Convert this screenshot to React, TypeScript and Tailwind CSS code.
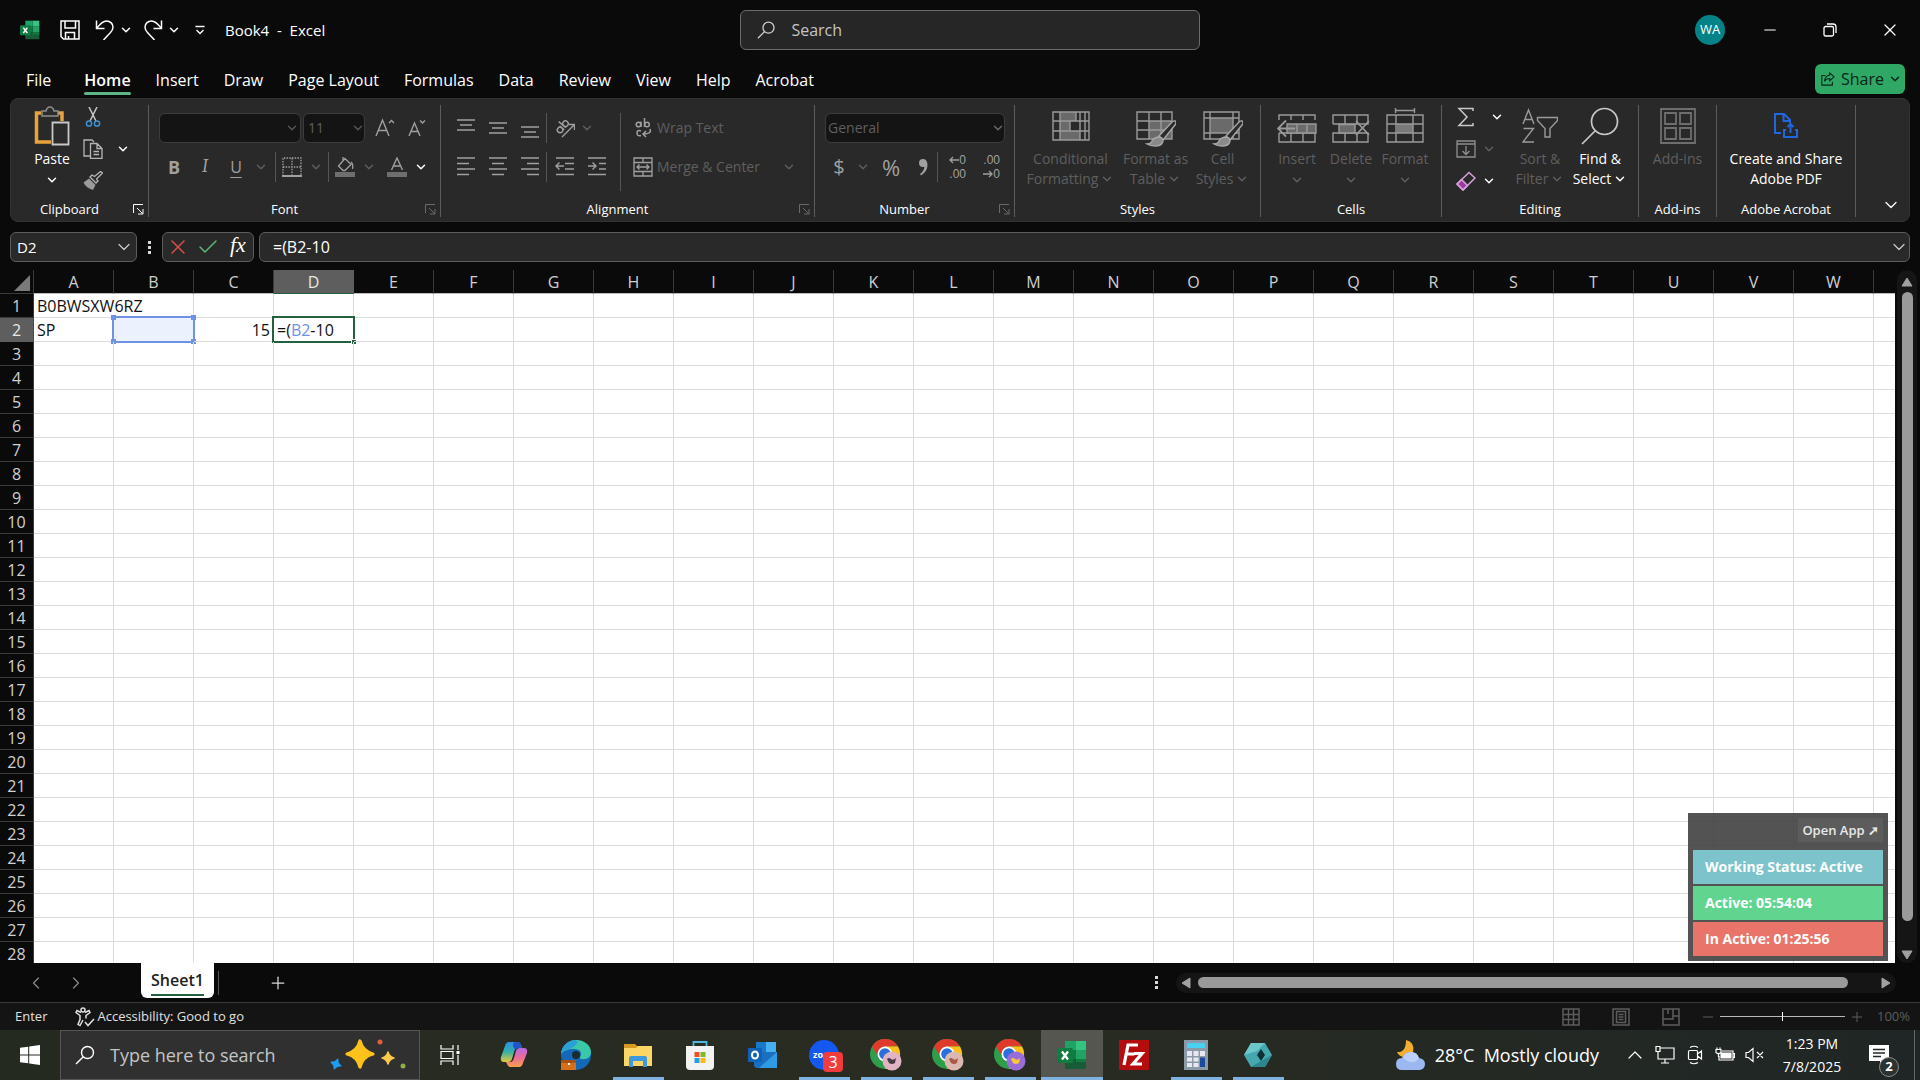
import React from "react";
import clsx from "clsx";
import { Check, ChevronDown, ChevronLeft, ChevronRight, ChevronUp, Minus, Plus, X } from "lucide-react";

type IconProps = { className?: string };

const MENU_TABS = ["File", "Home", "Insert", "Draw", "Page Layout", "Formulas", "Data", "Review", "View", "Help", "Acrobat"];
const COLUMNS = "ABCDEFGHIJKLMNOPQRSTUVW".split("");
const ROWS = Array.from({ length: 28 }, (_, i) => i + 1);

/* ---------- icons ---------- */

const ExcelIcon = ({ className }: IconProps) => (
    <svg viewBox="0 0 30 30" className={className}>
        <path d="M8 1h11v9H8z" fill="#21a366" />
        <path d="M19 1h10v9H19z" fill="#33c481" />
        <path d="M8 10h11v9H8z" fill="#107c41" />
        <path d="M19 10h10v9H19z" fill="#21a366" />
        <path d="M8 19h21v9q0 1-1 1H9q-1 0-1-1z" fill="#185c37" />
        <path d="M19 19h10v3H19z" fill="#107c41" />
        <rect x="0" y="8" width="16" height="15" rx="1.5" fill="#107c41" />
        <path d="m5 11.500 6 8M11 11.500l-6 8" stroke="#fff" strokeWidth="2.200" fill="none" />
    </svg>
);

const SaveIcon = ({ className }: IconProps) => (
    <svg viewBox="0 0 20 20" className={className} fill="none" stroke="currentColor" strokeWidth="1.500">
        <path d="M1 1h18v18H3.500L1 16.500zM5 1v7h10.500V1M5.500 19v-6.500h9V19M8.500 19v-3" />
    </svg>
);

const UndoIcon = ({ className }: IconProps) => (
    <svg viewBox="0 0 20 20" className={className} fill="none" stroke="currentColor" strokeWidth="1.500">
        <path d="M1.500 .5v8h8M1.800 8.200C5 4 7.500 1 11.500 1c4 0 6.500 3 6.500 6 0 2.500-1 4-2.500 5.500L8.500 20" />
    </svg>
);

const RedoIcon = ({ className }: IconProps) => (
    <svg viewBox="0 0 20 20" className={className} fill="none" stroke="currentColor" strokeWidth="1.500">
        <path d="M18.500 .5v8h-8M18.200 8.200C15 4 12.500 1 8.500 1 4.500 1 2 4 2 7c0 2.500 1 4 2.500 5.500l7 7.500" />
    </svg>
);

const SearchIcon = ({ className }: IconProps) => (
    <svg viewBox="0 0 20 20" className={className} fill="none" stroke="currentColor" strokeWidth="1.400">
        <circle cx="12.500" cy="7.500" r="6" />
        <path d="M8.300 11.700 1 19" />
    </svg>
);

const PasteIcon = ({ className }: IconProps) => (
    <svg viewBox="0 0 36 40" className={className} fill="none">
        <path d="M7 7H2.500v29H17M24 7h4v8" stroke="#e8a33d" strokeWidth="3.500" />
        <path d="M8 5h4q1-4 4-4t4 4h4v5H8z" fill="#2b2b2b" stroke="#8f8f8f" strokeWidth="1.500" />
        <path d="M18.500 16.500h16v22h-16z" fill="#2b2b2b" stroke="#c8c8c8" strokeWidth="1.800" />
    </svg>
);

const CutIcon = ({ className }: IconProps) => (
    <svg viewBox="0 0 20 20" className={className} fill="none">
        <path d="M6 0l7 14M14 0L7 14" stroke="#c8c8c8" strokeWidth="1.500" />
        <circle cx="6" cy="16.500" r="2.600" stroke="#3f8fd0" strokeWidth="1.500" />
        <circle cx="14" cy="16.500" r="2.600" stroke="#3f8fd0" strokeWidth="1.500" />
    </svg>
);

const CopyIcon = ({ className }: IconProps) => (
    <svg viewBox="0 0 20 20" className={className} fill="none" stroke="#b5b5b5" strokeWidth="1.300">
        <path d="M7 17H1V1h8l2 2M7.500 4.500H14l5 5v10H7.500zM14 4.500v5h5M10.500 12.500h5.500M10.500 15.500h5.500" />
    </svg>
);

const PainterIcon = ({ className }: IconProps) => (
    <svg viewBox="0 0 20 20" className={className}>
        <path d="M17.500 .5 19.500 2l-6 6 1.500 2-2 2-6-6 2-2 2.500 1.500z" fill="none" stroke="#b5b5b5" strokeWidth="1.300" />
        <path d="M6 7.500 12.500 14 10 19Q3 17 .5 11.500z" fill="#9a9a9a" />
    </svg>
);

const LauncherIcon = ({ className }: IconProps) => (
    <svg viewBox="0 0 11 11" className={className} fill="none" stroke="currentColor">
        <path d="M.5 9V.5H10M4 4l5.500 5.500M10 5v5H5" />
    </svg>
);

const LINES = {
    top: "M1 2h18M4 7h12M1 12h18",
    middle: "M1 5h18M4 10h12M1 15h18",
    bottom: "M1 9h18M4 14h12M1 19h18",
    left: "M1 1h18M1 6.500h12M1 12h18M1 17.500h12",
    center: "M1 1h18M4 6.500h12M1 12h18M4 17.500h12",
    right: "M1 1h18M7 6.500h12M1 12h18M7 17.500h12",
    outdent: "M1 1h18M10 6.500h9M10 12h9M1 17.500h18M9 9H1M4.500 5.500 1 9l3.500 3.500",
    indent: "M1 1h18M12 6.500h7M12 12h7M1 17.500h18M1 9h8M5.500 5.500 9 9l-3.500 3.500",
};

const LinesIcon = ({ kind }: { kind: keyof typeof LINES }) => (
    <svg viewBox="0 0 20 20" className="size-5" fill="none" stroke="currentColor" strokeWidth="1.400">
        <path d={LINES[kind]} />
    </svg>
);

const BordersIcon = ({ className }: IconProps) => (
    <svg viewBox="0 0 20 20" className={className} fill="none" stroke="currentColor" strokeWidth="1.300">
        <path d="M1 19V1h18v18M10 1v18M1 10h18" strokeDasharray="1.500 1.200" />
        <path d="M0 19h20" strokeWidth="2" />
    </svg>
);

const FillIcon = ({ className }: IconProps) => (
    <svg viewBox="0 0 20 20" className={className} fill="none" stroke="currentColor" strokeWidth="1.300">
        <path d="m10 1.500 6 6-6 6H8L3.500 9zM8 4V0M16 5q2.500 2 1.500 7" />
        <path d="M0 15h20v5H0z" fill="#6e6e6e" stroke="none" />
    </svg>
);

const MergeIcon = ({ className }: IconProps) => (
    <svg viewBox="0 0 20 20" className={className} fill="none" stroke="currentColor" strokeWidth="1.300">
        <path d="M1 1h18v18H1zM1 5.500h18M1 14.500h18M10 1v4.500M10 14.500V19M4 10h12M6.500 7.500 4 10l2.500 2.500M13.500 7.500 16 10l-2.500 2.500" />
    </svg>
);

const ConditionalIcon = ({ className }: IconProps) => (
    <svg viewBox="0 0 38 30" className={className} fill="none" stroke="#9a9a9a" strokeWidth="1.400">
        <path d="M8 1h16v9H8zM8 10h10v10H8zM8 20h20v9H8z" fill="#6a6a6a" stroke="none" />
        <path d="M1 1h36v28H1zM1 10h36M1 20h36M8 1v28M18 10v10M28 1v28M33 1v28M24 1v9" />
    </svg>
);

const Brush = () => (
    <>
        <path d="M39 10q2 1 0 4L27 29l-4-4L36 11q2-1.500 3-1z" fill="#2b2b2b" stroke="#a8a8a8" />
        <path d="M22 26q5 0 5 4-1 5-8 5-5 0-8-2 4 0 5-3t6-4z" fill="#8a8a8a" stroke="#a8a8a8" />
    </>
);

const FormatTableIcon = ({ className }: IconProps) => (
    <svg viewBox="0 0 40 36" className={className} fill="none" stroke="#9a9a9a" strokeWidth="1.400">
        <path d="M13 10h23v18H13z" fill="#6a6a6a" stroke="none" />
        <path d="M1 1h35v27H1zM1 10h35M1 19h35M13 1v27M25 1v27" />
        <Brush />
    </svg>
);

const CellStylesIcon = ({ className }: IconProps) => (
    <svg viewBox="0 0 40 36" className={className} fill="none" stroke="#9a9a9a" strokeWidth="1.400">
        <path d="M7 7h23v15H7z" fill="#6a6a6a" stroke="none" />
        <path d="M1 1h35v27H1zM1 7h35M1 22h35M7 1v27M30 1v27" />
        <Brush />
    </svg>
);

const InsertCellsIcon = ({ className }: IconProps) => (
    <svg viewBox="0 0 40 36" className={className} fill="none" stroke="#9a9a9a" strokeWidth="1.400">
        <path d="M2 12V7h36v5M2 25v9h36v-9M14 7v5M26 7v5M14 25v9M26 25v9M2 25h36" />
        <path d="M10 16h29v9H10z" fill="#6a6a6a" />
        <path d="M20 16v9M30 16v9" />
        <path d="M18 20.500H1M9 12.500l-8 8 8 8" strokeWidth="1.800" />
    </svg>
);

const DeleteCellsIcon = ({ className }: IconProps) => (
    <svg viewBox="0 0 40 36" className={className} fill="none" stroke="#9a9a9a" strokeWidth="1.400">
        <path d="M2 16V7h35v9H2M2 34v-9h35v9zM14 7v9M26 7v9M14 25v9M26 25v9" />
        <path d="M8 16.500h16v8.500H8z" fill="#6a6a6a" />
        <path d="M25 13l13 14M38 13 25 27" strokeWidth="1.800" />
    </svg>
);

const FormatCellsIcon = ({ className }: IconProps) => (
    <svg viewBox="0 0 40 36" className={className} fill="none" stroke="#9a9a9a" strokeWidth="1.400">
        <path d="M12 16h16v9H12z" fill="#7a7a7a" stroke="none" />
        <path d="M2 7h36v27H2zM2 16h36M2 25h36M11 7v27M28 7v27M10 2.500h20M10.500 0v5M29.500 0v5" />
    </svg>
);

const SigmaIcon = ({ className }: IconProps) => (
    <svg viewBox="0 0 20 20" className={className} fill="none" stroke="#c8c8c8" strokeWidth="1.500">
        <path d="M17 4V1.500H3L11 10l-8 8.500h14V16" />
    </svg>
);

const FillDownIcon = ({ className }: IconProps) => (
    <svg viewBox="0 0 20 20" className={className} fill="none" stroke="#8f8f8f" strokeWidth="1.300">
        <path d="M1 2h18v16H1zM1 5h18M10 7v8.500M6.500 12l3.500 3.500 3.500-3.500" />
    </svg>
);

const EraserIcon = ({ className }: IconProps) => (
    <svg viewBox="0 0 20 20" className={className} fill="none" stroke="#d9a0dc" strokeWidth="1.500">
        <path d="m5.500 8.500 6 6L7 19 1 13z" fill="#9b3aa0" />
        <path d="M13 1.500 19 7 7 19 1 13z" />
    </svg>
);

const SortFilterIcon = ({ className }: IconProps) => (
    <svg viewBox="0 0 36 36" className={className} fill="none" stroke="#9a9a9a" strokeWidth="1.400">
        <path d="M1 16 6.500 2 12 16M3 11.500h7M1.500 20.500h10L1 34h11M15.500 9.500h20v3l-7.500 8V29h-5v-8.500l-7.500-8z" />
    </svg>
);

const FindIcon = ({ className }: IconProps) => (
    <svg viewBox="0 0 38 38" className={className} fill="none" stroke="#c8c8c8" strokeWidth="1.700">
        <circle cx="23.500" cy="14.500" r="13" />
        <path d="M14 24 1 37" />
    </svg>
);

const AddinsIcon = ({ className }: IconProps) => (
    <svg viewBox="0 0 36 36" className={className} fill="none" stroke="#6e6e6e" strokeWidth="1.800">
        <path d="M1 1h34v34H1zM5 5h11v11H5zM20 5h11v11H20zM5 20h11v11H5zM20 20h11v11H20z" />
    </svg>
);

const AdobePdfIcon = ({ className }: IconProps) => (
    <svg viewBox="0 0 24 26" className={className} fill="none" stroke="#1f66e0" strokeWidth="2">
        <path d="M7 20H1V1h9l6 6v3M9.500 1v7H16M12 17h-2v7h13v-7h-2M16.500 20v-9M13.500 14l3-3 3 3" />
    </svg>
);

const ShareIcon = ({ className }: IconProps) => (
    <svg viewBox="0 0 16 16" className={className} fill="none" stroke="currentColor" strokeWidth="1.200">
        <path d="M5 4H1v11h12v-4M10 1l5 4.500-5 4.500V7.500q-4 0-6 3 .5-6 6-7z" />
    </svg>
);

const AccessibilityIcon = ({ className }: IconProps) => (
    <svg viewBox="0 0 20 20" className={className} fill="none" stroke="currentColor" strokeWidth="1.500">
        <circle cx="8" cy="3" r="2" />
        <path d="M6 5.500 2 3.500 1 5.500l4 3v4l-2 5 2 1 3-5.500M10 5.500l4-2 1 2-4 3v3M10 15l3 3.500L19 12" />
    </svg>
);

const WindowsIcon = ({ className }: IconProps) => (
    <svg viewBox="0 0 20 20" className={className} fill="#fff">
        <path d="M0 2.800 8.200 1.700v7.800H0zM9.200 1.500 20 0v9.500H9.200zM0 10.500h8.200v7.800L0 17.200zM9.200 10.500H20V20L9.200 18.500z" />
    </svg>
);

const star = "M0-10Q2-2 10 0 2 2 0 10-2 2-10 0-2-2 0-10z";

const SparklesIcon = ({ className }: IconProps) => (
    <svg viewBox="0 0 80 32" className={className} strokeLinejoin="round">
        <path d={star} transform="translate(31 15) scale(1.300)" fill="#fcc21b" stroke="#fcc21b" strokeWidth="2.500" />
        <path d={star} transform="translate(59 19) scale(.6)" fill="#fcc94a" stroke="#fcc94a" strokeWidth="2.500" />
        <path d={star} transform="translate(7 25) rotate(20) scale(.5)" fill="#1e9df0" stroke="#1e9df0" strokeWidth="3" />
        <circle cx="51" cy="3" r="2.500" fill="#e0603c" />
        <circle cx="74" cy="27" r="2.500" fill="#8bb04a" />
    </svg>
);

const TaskViewIcon = ({ className }: IconProps) => (
    <svg viewBox="0 0 20 20" className={className} fill="none" stroke="#fff" strokeWidth="1.200">
        <path d="M1 0v4h12V0M1 6.500h12v7H1zM1 20v-4h12v4M18 0v5M18 10v10" />
        <path d="M16.500 6h3v3h-3z" fill="#fff" stroke="none" />
    </svg>
);

const CopilotIcon = () => (
    <svg viewBox="0 0 30 30" className="size-[30px]">
        <defs>
            <linearGradient id="copA" x1="0" y1="0" x2="0" y2="1">
                <stop offset="0" stopColor="#2a8fe8" />
                <stop offset=".5" stopColor="#36b2a8" />
                <stop offset="1" stopColor="#e8c83a" />
            </linearGradient>
            <linearGradient id="copB" x1="0" y1="0" x2="0" y2="1">
                <stop offset="0" stopColor="#b56ae8" />
                <stop offset=".5" stopColor="#ee6a9a" />
                <stop offset="1" stopColor="#f7a04a" />
            </linearGradient>
        </defs>
        <path d="M10 2h9q2 0 3 3l1 3h-4q-3 0-4 4l-2 7q-1 3-4 3H5q-4 0-3-5L6 6q1-4 4-4z" fill="url(#copA)" />
        <path d="M19 2q2 0 3 3l1 3h-4q-2 0-3 2l-2-4q0-4 2-4z" fill="#2254c8" />
        <path d="M20 27h-9q-2 0-3-3l-1-2h4q3 0 4-4l2-7q1-3 4-3h4q4 0 3 5l-4 10q-1 4-4 4z" fill="url(#copB)" />
    </svg>
);

const EdgeIcon = () => (
    <svg viewBox="0 0 30 30" className="size-[30px]">
        <circle cx="15" cy="15" r="15" fill="#1468b8" />
        <path d="M0 14C1 5 8 0 15 0c9 0 15 6 15 12 0 5-4 8-9 7-3 0-2-2-1-4 1-4-3-6-7-6C7 9 2 11 0 14z" fill="#3ac8a8" />
        <path d="M0 14C1 5 8 0 14 0c6 3-1 6-5 9-4 1-7 2-9 5z" fill="#2a9fd8" />
        <circle cx="15" cy="15" r="4" fill="#1d2a30" />
        <path d="M0 20h15v10H0z" fill="#d8701a" />
        <path d="M0 20h15v3H0z" fill="#a8500f" />
        <path d="M7 23h2v2H7z" fill="#fff" />
    </svg>
);

const FolderIcon = () => (
    <svg viewBox="0 0 30 30" className="size-[30px]">
        <path d="M1 4h11l2 2h14v6H1z" fill="#d99a20" />
        <path d="M1 8h12l2-2h14v20H1z" fill="#fbd667" />
        <path d="M6 27V18q0-2 2-2h14q2 0 2 2v9h-4v-6H10v6z" fill="#3f97dc" />
    </svg>
);

const StoreIcon = () => (
    <svg viewBox="0 0 30 30" className="size-[30px]">
        <path d="M8.500 8V2h13v6" fill="none" stroke="#4ab8e0" strokeWidth="1.800" />
        <path d="M1 6h28v20q0 4-4 4H5q-4 0-4-4z" fill="#f2f2f2" />
        <path d="M9.500 12h5v5h-5z" fill="#f04e24" />
        <path d="M15.500 12h5v5h-5z" fill="#7db928" />
        <path d="M9.500 18h5v5h-5z" fill="#1fa0e0" />
        <path d="M15.500 18h5v5h-5z" fill="#fdb813" />
    </svg>
);

const OutlookIcon = () => (
    <svg viewBox="0 0 30 30" className="size-[30px]">
        <path d="M9 2h20v10H9z" fill="#1a78c8" />
        <path d="M19 2h10v10H19z" fill="#48b0ee" />
        <path d="M7 12h23v16H9l-2-2z" fill="#1b6fc0" />
        <path d="M30 12v16H12z" fill="#2f9be6" />
        <rect x="1" y="8" width="14" height="14" rx="1" fill="#0f62b8" />
        <ellipse cx="8" cy="15" rx="3" ry="3.500" fill="none" stroke="#fff" strokeWidth="2" />
    </svg>
);

const ZoomAppIcon = () => (
    <span className="relative flex size-[30px] items-center rounded-full bg-[#1558f0] pl-1 text-[9px] font-bold text-white">
        zo
        <span className="absolute -right-1 -bottom-0.5 flex size-5 items-center justify-center rounded bg-[#f23c3c] text-base font-normal">
            3
        </span>
    </span>
);

const ChromeIcon = ({ badge, mark }: { badge: string; mark: string }) => (
    <svg viewBox="0 0 32 32" className="size-8">
        <circle cx="15" cy="15" r="15" fill="#2f9e4a" />
        <path d="M2 7.500A15 15 0 0 1 28 7.500H15L9 18.500z" fill="#e03a2c" />
        <path d="M28 7.500A15 15 0 0 1 15 30l7-11.500L15 7.500z" fill="#fbc116" />
        <circle cx="15" cy="15" r="7.500" fill="#fff" />
        <circle cx="15" cy="15" r="5.800" fill="#2a6fdc" />
        <circle cx="22" cy="22" r="9.500" fill={badge} />
        <path d="M17 20q2-2 4 0t5-1l-1 5q-3 2-6 0z" fill={mark} />
    </svg>
);

const FileZillaIcon = () => (
    <svg viewBox="0 0 30 30" className="size-[30px]">
        <path d="M0 0h30v30H0z" fill="#b50d0d" />
        <path d="M5 25 9 5h10M7.500 14h8M15 13.500h8L14 24h9" fill="none" stroke="#fff" strokeWidth="3.200" />
    </svg>
);

const CalculatorIcon = () => (
    <svg viewBox="0 0 24 30" className="h-[30px] w-6">
        <path d="M0 0h24v30H0z" fill="#8a9aa8" />
        <path d="M3 3h18v5H3z" fill="#4ad0f0" />
        <path d="M3 11h5v5H3zM9.500 11h5v5h-5zM16 11h5v5h-5zM3 17.500h5v4H3zM9.500 17.500h5v4h-5zM3 23h5v4H3zM9.500 23h5v4h-5z" fill="#e8e8ee" />
        <path d="M16 17.500h5V27h-5z" fill="#1c4a9c" />
    </svg>
);

const HexIcon = () => (
    <svg viewBox="0 0 30 30" className="size-[30px]">
        <path d="M1 15 8 3h14l7 12-7 12H8z" fill="#45a8ae" />
        <path d="M1 15 8 3h14l-8 8z" fill="#6cc6ca" />
        <path d="M8 27h14l7-12-9 5z" fill="#2d868e" />
        <path d="m18 9 4 6-4 6-4-6z" fill="#0d3038" />
    </svg>
);

const WeatherIcon = ({ className }: IconProps) => (
    <svg viewBox="0 0 30 30" className={className}>
        <path d="M11 0q9 2 7 12-2 6-8 5-6 0-8-5 9 1 9-12z" fill="#f4ae2e" />
        <path d="M7 30q-6 0-6-6t6-6q2-6 9-6 6 0 8 6 6 1 6 6t-5 6z" fill="#9cb8f0" />
        <path d="M8 18q2-6 8-6t8 6q-3 5-8 4t-8-4z" fill="#bcd0fa" />
    </svg>
);

const MonitorIcon = () => (
    <svg viewBox="0 0 20 20" className="size-5" fill="none" stroke="#fff" strokeWidth="1.200">
        <path d="M5 3h14v11H3V9M10 14v4M6 18h8M1 1.500h4v5H1zM3 6.500V9" />
    </svg>
);

const CameraIcon = () => (
    <svg viewBox="0 0 20 20" className="size-5" fill="none" stroke="#fff" strokeWidth="1.200">
        <path d="M4.500 5.500h7q1 0 1 1v7q0 1-1 1h-7q-1 0-1-1v-7q0-1 1-1zM12.500 9l4-3v8l-4-3M5 2.500q4-2.500 8 0M5 17.500q4 2.500 8 0" />
    </svg>
);

const BatteryIcon = () => (
    <svg viewBox="0 0 20 20" className="size-5" fill="none" stroke="#fff" strokeWidth="1.200">
        <path d="M7 6h11v9H4v-4M18.500 8.500h1v4h-1M1 4.500h5v3q-2.500 2.500-5 0zM2 2.500v2M5 2.500v2M3.500 8.500V12" />
        <path d="M6 8h10v5H6z" fill="#fff" />
    </svg>
);

const MutedIcon = () => (
    <svg viewBox="0 0 20 20" className="size-5" fill="none" stroke="#fff" strokeWidth="1.200">
        <path d="M1 7.500h2.500L8 3.500v13l-4.500-4H1zM12 7l6 6M18 7l-6 6" />
    </svg>
);

const NotificationIcon = () => (
    <svg viewBox="0 0 20 20" className="size-5">
        <path d="M0 0h20v16h-5l-4 4v-4H0z" fill="#fff" />
        <path d="M4 4.500h12M4 8h12M4 11.500h8" stroke="#1f2826" strokeWidth="1.300" />
    </svg>
);

/* ---------- ribbon pieces ---------- */

const Chevron = ({ className }: IconProps) => <ChevronDown className={clsx("size-3.5 shrink-0", className)} strokeWidth={2.5} />;

const ToolButton = ({ label, className, children }: { label: string; className?: string; children: React.ReactNode }) => (
    <button aria-label={label} className={clsx("flex h-8 shrink-0 items-center justify-center", className)}>
        {children}
    </button>
);

const VLine = ({ className }: IconProps) => <span className={clsx("w-px shrink-0 bg-[#555]", className)} />;

const Group = ({ title, className, launcher, children }: {
    title: string;
    className: string;
    launcher?: "on" | "off";
    children: React.ReactNode;
}) => (
    <section className={clsx("mt-1.5 mb-1 flex shrink-0 flex-col border-r border-[#5c5c5c]", className)}>
        <div className="flex flex-1 justify-center">{children}</div>
        <div className="flex h-4 items-center">
            <h2 className="flex-1 text-center text-[13px] leading-4 text-white">{title}</h2>
            {launcher && (
                <button aria-label={`${title} settings`} className={clsx("flex w-5 justify-center", launcher === "on" ? "text-white" : "text-[#6a6a6a]")}>
                    <LauncherIcon className="size-[11px]" />
                </button>
            )}
        </div>
    </section>
);

// tall button: picture on top, one or two caption lines below
const BigButton = ({ icon, lines, chevron, enabled, className }: {
    icon: React.ReactNode;
    lines: string[];
    chevron?: "inline" | "below";
    enabled?: boolean;
    className?: string;
}) => (
    <button className={clsx("flex shrink-0 flex-col items-center text-sm leading-5 whitespace-nowrap", enabled ? "text-white" : "text-[#5f5f5f]", className)}>
        <span className="flex h-11 shrink-0 items-center justify-center pb-0.5">{icon}</span>
        {lines.map((line, i) => (
            <span key={line} className="flex items-center">
                {line}
                {chevron === "inline" && i === lines.length - 1 && <Chevron className="ml-0.5" />}
            </span>
        ))}
        {chevron === "below" && <Chevron className="mt-1" />}
    </button>
);

const Ribbon = () => (
    <div className="mx-2.5 flex h-[124px] rounded-lg border border-[#333] bg-[#292929] text-[#a0a0a0]">
        <Group title="Clipboard" className="w-[138px]" launcher="on">
            <div className="flex flex-1 pl-4">
                <BigButton icon={<PasteIcon className="h-10 w-9" />} lines={["Paste"]} chevron="below" enabled className="w-[50px]" />
                <div className="-mt-1 ml-1 flex w-6 flex-col items-center">
                    <ToolButton label="Cut"><CutIcon className="size-5" /></ToolButton>
                    <ToolButton label="Copy"><CopyIcon className="size-5" /></ToolButton>
                    <ToolButton label="Format Painter"><PainterIcon className="size-5" /></ToolButton>
                </div>
                <ToolButton label="Copy options" className="mt-7 ml-0.5 w-8 text-white"><Chevron /></ToolButton>
            </div>
        </Group>

        <Group title="Font" className="w-[292px]" launcher="off">
            <div className="flex flex-1 flex-col pl-2.5">
                <div className="flex h-[46px] items-center">
                    <div className="grid w-[142px] items-center">
                        <select aria-label="Font" className="col-start-1 row-start-1 h-[30px] appearance-none rounded-md border border-[#3c3c3c] bg-[#141414] px-1.5 text-sm">
                            <option></option>
                        </select>
                        <Chevron className="pointer-events-none col-start-1 row-start-1 mr-0.5 justify-self-end text-[#555]" />
                    </div>
                    <div className="ml-0.5 grid w-[62px] items-center">
                        <select aria-label="Font size" className="col-start-1 row-start-1 h-[30px] appearance-none rounded-md border border-[#3c3c3c] bg-[#141414] px-1 text-sm text-[#5f5f5f]">
                            <option>11</option>
                        </select>
                        <Chevron className="pointer-events-none col-start-1 row-start-1 justify-self-end text-[#555]" />
                    </div>
                    <ToolButton label="Increase Font Size" className="ml-1 w-8">
                        <svg viewBox="0 0 20 20" className="size-5" fill="none" stroke="currentColor" strokeWidth="1.400">
                            <path d="M1 18 7.500 2 14 18M3.500 12.500h8M14 5l2.500-2.500L19 5" />
                        </svg>
                    </ToolButton>
                    <ToolButton label="Decrease Font Size" className="w-8">
                        <svg viewBox="0 0 20 20" className="size-5" fill="none" stroke="currentColor" strokeWidth="1.400">
                            <path d="M2 18 7.500 5 13 18M4 13.500h7M13 2.500 15.500 5 18 2.500" />
                        </svg>
                    </ToolButton>
                </div>
                <div className="flex h-8 items-center">
                    <ToolButton label="Bold" className="w-[30px] text-lg font-bold">B</ToolButton>
                    <ToolButton label="Italic" className="w-8 font-serif text-lg italic">I</ToolButton>
                    <ToolButton label="Underline" className="w-[30px] text-base underline underline-offset-4">U</ToolButton>
                    <ToolButton label="Underline options" className="w-5 text-[#5f5f5f]"><Chevron /></ToolButton>
                    <VLine className="mr-0.5 ml-1 h-[30px]" />
                    <ToolButton label="Borders" className="w-7"><BordersIcon className="size-5" /></ToolButton>
                    <ToolButton label="Border options" className="w-5 text-[#5f5f5f]"><Chevron /></ToolButton>
                    <VLine className="mr-0.5 ml-0.5 h-[30px]" />
                    <ToolButton label="Fill Color" className="w-7"><FillIcon className="size-5" /></ToolButton>
                    <ToolButton label="Fill options" className="w-5 text-[#5f5f5f]"><Chevron /></ToolButton>
                    <ToolButton label="Font Color" className="ml-1 w-7">
                        <svg viewBox="0 0 20 20" className="size-5" fill="none" stroke="currentColor" strokeWidth="1.400">
                            <path d="M4.500 13 10 1l5.500 12M6.500 9h7" />
                            <path d="M0 15h20v5H0z" fill="#6e6e6e" stroke="none" />
                        </svg>
                    </ToolButton>
                    <ToolButton label="Font color options" className="w-5 text-white"><Chevron /></ToolButton>
                </div>
            </div>
        </Group>

        <Group title="Alignment" className="w-[374px]" launcher="off">
            <div className="flex flex-1 pl-[9px]">
                <div className="flex flex-col">
                    <div className="flex h-[46px] items-center">
                        <ToolButton label="Top Align" className="w-8"><LinesIcon kind="top" /></ToolButton>
                        <ToolButton label="Middle Align" className="w-8"><LinesIcon kind="middle" /></ToolButton>
                        <ToolButton label="Bottom Align" className="w-8"><LinesIcon kind="bottom" /></ToolButton>
                        <VLine className="mr-1 h-[30px]" />
                        <ToolButton label="Orientation" className="w-7">
                            <svg viewBox="0 0 20 20" className="size-5" fill="none" stroke="currentColor" strokeWidth="1.400">
                                <g transform="rotate(-50 7 9)">
                                    <circle cx="3.500" cy="9.500" r="2.800" />
                                    <path d="M6.300 6.500v6M9 3v9.500" />
                                    <circle cx="11.800" cy="9.500" r="2.800" />
                                </g>
                                <path d="M7 19 19 7M14 6.500h5.500V12" />
                            </svg>
                        </ToolButton>
                        <ToolButton label="Orientation options" className="w-4 text-[#5f5f5f]"><Chevron /></ToolButton>
                    </div>
                    <div className="flex h-8 items-center">
                        <ToolButton label="Align Left" className="w-8"><LinesIcon kind="left" /></ToolButton>
                        <ToolButton label="Center" className="w-8"><LinesIcon kind="center" /></ToolButton>
                        <ToolButton label="Align Right" className="w-8"><LinesIcon kind="right" /></ToolButton>
                        <VLine className="h-[30px]" />
                        <ToolButton label="Decrease Indent" className="ml-0.5 w-8"><LinesIcon kind="outdent" /></ToolButton>
                        <ToolButton label="Increase Indent" className="w-8"><LinesIcon kind="indent" /></ToolButton>
                    </div>
                </div>
                <VLine className="mt-2 ml-[7px] h-[78px]" />
                <div className="ml-3 flex flex-col text-sm text-[#5f5f5f]">
                    <button className="flex h-[46px] items-center gap-1">
                        <svg viewBox="0 0 20 20" className="size-5 text-[#a0a0a0]" fill="none" stroke="currentColor" strokeWidth="1.500">
                            <circle cx="5.500" cy="6.500" r="2.300" />
                            <path d="M8 3.500V9M11.500 0v9" />
                            <circle cx="14" cy="6.500" r="2.300" />
                            <path d="M8 13q-4-1.500-4 2t4 2.500M17 11q2 5-6.500 5M13 13l-3 3 3 3" />
                        </svg>
                        Wrap Text
                    </button>
                    <button className="flex h-8 items-center gap-1">
                        <MergeIcon className="size-5 text-[#a0a0a0]" />
                        Merge &amp; Center
                        <Chevron className="ml-[18px]" />
                    </button>
                </div>
            </div>
        </Group>

        <Group title="Number" className="w-[200px]" launcher="off">
            <div className="flex flex-1 flex-col pl-2.5">
                <div className="flex h-[46px] items-center">
                    <div className="grid w-[180px] items-center">
                        <select aria-label="Number format" className="col-start-1 row-start-1 h-[30px] appearance-none rounded-md border border-[#3c3c3c] bg-[#141414] px-0.5 text-sm text-[#5f5f5f]">
                            <option>General</option>
                        </select>
                        <Chevron className="pointer-events-none col-start-1 row-start-1 justify-self-end text-[#6a6a6a]" />
                    </div>
                </div>
                <div className="flex h-8 items-center">
                    <ToolButton label="Accounting" className="w-7 text-xl">$</ToolButton>
                    <ToolButton label="Accounting options" className="w-5 text-[#5f5f5f]"><Chevron /></ToolButton>
                    <ToolButton label="Percent" className="w-9 text-[22px]">%</ToolButton>
                    <ToolButton label="Comma" className="w-7">
                        <svg viewBox="0 0 10 18" className="h-[18px] w-2.5" fill="currentColor">
                            <path d="M5 1a4 4 0 0 0 0 8q1 0 1.500-.5Q6 13 2 16l1 1.500q6.500-4 6.500-11Q9 1 5 1z" />
                        </svg>
                    </ToolButton>
                    <VLine className="h-[30px]" />
                    <ToolButton label="Increase Decimal" className="w-7 flex-col items-end! font-['Liberation_Sans',sans-serif] text-xs leading-[14px]">
                        <span className="flex items-center">
                            <svg viewBox="0 0 10 8" className="h-2 w-2.5" fill="none" stroke="currentColor" strokeWidth="1.300"><path d="M10 4H1M4 1 1 4l3 3" /></svg>
                            0
                        </span>
                        <span>.00</span>
                    </ToolButton>
                    <ToolButton label="Decrease Decimal" className="ml-0.5 w-8 flex-col items-end! font-['Liberation_Sans',sans-serif] text-xs leading-[14px]">
                        <span>.00</span>
                        <span className="flex items-center">
                            <svg viewBox="0 0 10 8" className="h-2 w-2.5" fill="none" stroke="currentColor" strokeWidth="1.300"><path d="M0 4h9M6 1l3 3-3 3" /></svg>
                            0
                        </span>
                    </ToolButton>
                </div>
            </div>
        </Group>

        <Group title="Styles" className="w-[246px]">
            <BigButton icon={<ConditionalIcon className="h-[30px] w-[38px]" />} lines={["Conditional", "Formatting"]} chevron="inline" className="w-[94px]" />
            <BigButton icon={<FormatTableIcon className="mt-1.5 h-9 w-10" />} lines={["Format as", "Table"]} chevron="inline" className="w-[76px]" />
            <BigButton icon={<CellStylesIcon className="mt-1.5 h-9 w-10" />} lines={["Cell", "Styles"]} chevron="inline" className="w-[58px]" />
        </Group>

        <Group title="Cells" className="w-[181px]">
            <BigButton icon={<InsertCellsIcon className="h-9 w-10" />} lines={["Insert"]} chevron="below" className="w-[54px]" />
            <BigButton icon={<DeleteCellsIcon className="h-9 w-10" />} lines={["Delete"]} chevron="below" className="w-[54px]" />
            <BigButton icon={<FormatCellsIcon className="h-9 w-10" />} lines={["Format"]} chevron="below" className="w-[54px]" />
        </Group>

        <Group title="Editing" className="w-[197px]">
            <div className="-mt-1 flex w-[60px] flex-col pl-1">
                <div className="flex items-center gap-3">
                    <ToolButton label="AutoSum" className="w-6"><SigmaIcon className="size-5" /></ToolButton>
                    <ToolButton label="AutoSum options" className="text-white"><Chevron /></ToolButton>
                </div>
                <div className="flex items-center gap-1">
                    <ToolButton label="Fill" className="w-6"><FillDownIcon className="size-5" /></ToolButton>
                    <ToolButton label="Fill options" className="text-[#5f5f5f]"><Chevron /></ToolButton>
                </div>
                <div className="flex items-center gap-1">
                    <ToolButton label="Clear" className="w-6"><EraserIcon className="size-5" /></ToolButton>
                    <ToolButton label="Clear options" className="text-white"><Chevron /></ToolButton>
                </div>
            </div>
            <BigButton icon={<SortFilterIcon className="size-9" />} lines={["Sort &", "Filter"]} chevron="inline" className="w-[60px]" />
            <BigButton icon={<FindIcon className="size-[38px]" />} lines={["Find &", "Select"]} chevron="inline" enabled className="w-[60px]" />
        </Group>

        <Group title="Add-ins" className="w-[78px]">
            <BigButton icon={<AddinsIcon className="size-9" />} lines={["Add-ins"]} />
        </Group>

        <Group title="Adobe Acrobat" className="w-[139px]">
            <BigButton icon={<AdobePdfIcon className="h-[26px] w-6" />} lines={["Create and Share", "Adobe PDF"]} enabled />
        </Group>

        <div className="flex flex-1 items-end justify-end pr-2 pb-1.5">
            <button aria-label="Collapse ribbon" className="text-white"><ChevronDown className="size-5" strokeWidth={1.5} /></button>
        </div>
    </div>
);

/* ---------- window chrome ---------- */

const TitleBar = () => (
    <header className="flex h-[60px] items-center pl-5 text-white">
        <div className="flex flex-1 items-center">
            <ExcelIcon className="size-5" />
            <button aria-label="Save" className="ml-5"><SaveIcon className="size-5" /></button>
            <button aria-label="Undo" className="ml-[15px]"><UndoIcon className="size-5" /></button>
            <button aria-label="Undo options" className="ml-1"><Chevron /></button>
            <button aria-label="Redo" className="ml-2.5"><RedoIcon className="size-5" /></button>
            <button aria-label="Redo options" className="ml-1"><Chevron /></button>
            <button aria-label="Customize Quick Access Toolbar" className="ml-3.5">
                <svg viewBox="0 0 10 10" className="size-2.5" fill="none" stroke="currentColor" strokeWidth="1.300">
                    <path d="M.5 1.500h9M1.500 5 5 8.500 8.500 5" />
                </svg>
            </button>
            <h1 className="ml-5 text-[15px] whitespace-pre">Book4  -  Excel</h1>
        </div>
        <label className="flex h-10 w-[460px] items-center gap-4 rounded-md border border-[#6b6b6b] bg-[#262626] px-4 text-[#cfcfcf]">
            <SearchIcon className="size-5" />
            <input type="search" placeholder="Search" className="w-full bg-transparent text-base outline-none placeholder:text-[#c4c4c4]" />
        </label>
        <div className="flex flex-1 items-center justify-end">
            <button className="flex size-[30px] items-center justify-center rounded-full bg-[#038387] text-[13px]">WA</button>
            <button aria-label="Minimize" className="ml-[15px] flex w-[60px] justify-center"><Minus className="h-5 w-[18px]" strokeWidth={1.5} /></button>
            <button aria-label="Restore" className="flex w-[60px] justify-center">
                <svg viewBox="0 0 14 14" className="size-3.5" fill="none" stroke="currentColor" strokeWidth="1.300">
                    <rect x="1" y="3.500" width="9.500" height="9.500" rx="1.500" />
                    <path d="M4 1h6q3 0 3 3v6" />
                </svg>
            </button>
            <button aria-label="Close" className="flex w-[60px] justify-center"><X className="size-5" strokeWidth={1.500} /></button>
        </div>
    </header>
);

const MenuTabs = () => (
    <nav className="flex h-[38px] items-start justify-between pr-[15px] pl-3.5 text-white">
        <div className="flex gap-px">
            {MENU_TABS.map((tab) => (
                <button key={tab} className={clsx("flex flex-col px-3 pt-2", tab === "File" && "mr-2", tab === "Home" && "font-semibold")}>
                    <span className="text-base leading-6">{tab}</span>
                    {tab === "Home" && <span className="h-[3px] w-full rounded-full bg-[#5fb587]" />}
                </button>
            ))}
        </div>
        <button className="mt-1 flex h-[30px] w-[90px] items-center gap-1.5 rounded-md bg-[#2fa866] pl-1.5 text-base text-[#0b2416]">
            <ShareIcon className="size-3.5 shrink-0" />
            Share
            <Chevron className="-ml-0.5" />
        </button>
    </nav>
);

const Dots = () => (
    <span className="flex w-6 flex-col items-center gap-0.5">
        <i className="size-[3px] bg-[#d8d8d8]" />
        <i className="size-[3px] bg-[#d8d8d8]" />
        <i className="size-[3px] bg-[#d8d8d8]" />
    </span>
);

const FormulaBar = () => (
    <div className="mx-2.5 mt-2.5 mb-2 flex h-[30px] text-white">
        <div className="flex w-[127px] items-center rounded-md border border-[#5c5c5c] bg-[#292929] pr-0.5 pl-1.5">
            <input aria-label="Name box" defaultValue="D2" className="w-full min-w-0 bg-transparent text-[15px] outline-none" />
            <button aria-label="Name box options"><ChevronDown className="size-5 text-[#c8c8c8]" strokeWidth={1.5} /></button>
        </div>
        <div className="flex items-center"><Dots /></div>
        <div className="ml-px flex w-[92px] items-center gap-1.5 rounded-md border border-[#5c5c5c] bg-[#292929] pl-[3px]">
            <button aria-label="Cancel"><X className="size-6 text-[#d8504c]" strokeWidth={1.500} /></button>
            <button aria-label="Enter"><Check className="size-6 text-[#5fb573]" strokeWidth={1.500} /></button>
            <button aria-label="Insert function" className="pb-1 pl-1 font-['Liberation_Serif',serif] text-[22px] leading-6 italic">fx</button>
        </div>
        <div className="ml-[5px] flex flex-1 items-center rounded-md border border-[#5c5c5c] bg-[#292929] pl-[13px]">
            <input aria-label="Formula" defaultValue="=(B2-10" className="flex-1 bg-transparent text-base outline-none" />
            <button aria-label="Expand formula bar"><ChevronDown className="size-5 text-[#c8c8c8]" strokeWidth={1.5} /></button>
        </div>
    </div>
);

/* ---------- sheet ---------- */

const Cell = ({ id }: { id: string }) => {
    const base = "relative h-6 border-r border-b border-[#dcdcdc] px-[3px] whitespace-nowrap";
    switch (id) {
        case "A1":
            return <td className={clsx(base, "border-r-transparent")}>B0BWSXW6RZ</td>;
        case "A2":
            return <td className={base}>SP</td>;
        case "B2":
            return (
                <td className={base}>
                    <span className="absolute -inset-0.5 border-2 border-[#6d92e6] bg-[#ecf2fd]" />
                    <span className="absolute -top-[3px] -left-[3px] size-[5px] bg-[#6d92e6]" />
                    <span className="absolute -top-[3px] -right-[3px] size-[5px] bg-[#6d92e6]" />
                    <span className="absolute -bottom-[3px] -left-[3px] size-[5px] bg-[#6d92e6]" />
                    <span className="absolute -right-[3px] -bottom-[3px] size-[5px] bg-[#6d92e6]" />
                </td>
            );
        case "C2":
            return <td className={clsx(base, "text-right")}>15</td>;
        case "D2":
            return (
                <td className={base}>
                    <span className="absolute -inset-0.5 border-2 border-[#22603f]" />
                    <span className="absolute -right-[3px] -bottom-[3px] size-[5px] border-t border-l border-white bg-[#22603f]" />
                    =(<span className="text-[#6d92e6]">B2</span>-10
                </td>
            );
        default:
            return <td className={base}></td>;
    }
};

const Sheet = () => (
    <table className="w-[1954px] table-fixed border-separate border-spacing-0 bg-white text-base leading-[22px] text-[#111]">
        <thead>
            <tr className="bg-[#0a0a0a] text-[#d0d0d0]">
                <th className="h-6 w-[34px] border-r border-b border-[#3a3a3a] p-0">
                    <svg viewBox="0 0 16 16" className="mt-0.5 ml-3.5 size-4"><path d="M16 0v16H0z" fill="#7a7a7a" /></svg>
                </th>
                {COLUMNS.map((col) => (
                    <th
                        key={col}
                        scope="col"
                        className={clsx(
                            "w-20 border-r border-b p-0 font-normal",
                            col === "D" ? "border-r-[#5e5e5e] border-b-[#22603f] bg-[#5e5e5e] text-[#e8e8e8]" : "border-r-[#3a3a3a] border-b-[#bdbdbd]",
                        )}
                    >
                        {col}
                    </th>
                ))}
                <th className="w-20 border-b border-[#bdbdbd]"></th>
            </tr>
        </thead>
        <tbody>
            {ROWS.map((row) => (
                <tr key={row}>
                    <th
                        scope="row"
                        className={clsx(
                            "border-r border-b p-0 font-normal",
                            row === 2 ? "border-r-[#22603f] border-b-[#5e5e5e] bg-[#5e5e5e] text-[#e8e8e8]" : "border-[#3a3a3a] bg-[#0a0a0a] text-[#d0d0d0]",
                        )}
                    >
                        {row}
                    </th>
                    {COLUMNS.map((col) => <Cell key={col} id={`${col}${row}`} />)}
                    <td className="border-b border-[#dcdcdc]"></td>
                </tr>
            ))}
        </tbody>
    </table>
);

// floating time tracker pinned over the sheet
const StatusWidget = () => (
    <aside className="absolute right-[7px] bottom-0.5 flex w-[200px] flex-col gap-0.5 bg-[#404040]/90 p-[5px] text-sm font-bold whitespace-nowrap text-white">
        <button className="mb-1.5 self-end bg-[#5c5c5c] px-1 text-[13px] leading-6 font-semibold text-[#e8e8e8]">Open App ➚</button>
        <p className="bg-[#7ec9d3]/95 px-3 leading-[34px]">Working Status: Active</p>
        <p className="bg-[#62db94]/95 px-3 leading-[34px]">Active: 05:54:04</p>
        <p className="bg-[#f0766c]/95 px-3 leading-[34px]">In Active: 01:25:56</p>
    </aside>
);

const Arrow = ({ d }: { d: string }) => (
    <svg viewBox="0 0 12 12" className="size-3 shrink-0 text-[#a0a0a0]" fill="currentColor" stroke="currentColor" strokeLinejoin="round"><path d={d} /></svg>
);

const SheetTabs = () => (
    <div className="flex h-10 shrink-0 items-center border-b border-[#3a3a3a]">
        <button aria-label="Previous sheet" className="ml-[26px] text-[#8a8a8a]"><ChevronLeft className="size-5" strokeWidth={1.5} /></button>
        <button aria-label="Next sheet" className="ml-5 text-[#8a8a8a]"><ChevronRight className="size-5" strokeWidth={1.5} /></button>
        <button className="ml-[55px] flex h-[35px] items-center self-start rounded-b-md bg-white px-2.5 text-base font-semibold text-[#222]">
            <span className="border-b-2 border-[#22603f] leading-7">Sheet1</span>
        </button>
        <VLine className="ml-1 h-6" />
        <button aria-label="New sheet" className="ml-[49px] text-[#d8d8d8]"><Plus className="size-5" strokeWidth={1.500} /></button>
        <div className="ml-auto flex w-[776px] items-center pr-6">
            <Dots />
            <div className="ml-2 flex flex-1 items-center justify-between rounded-full bg-[#151515] px-1 py-1">
                <Arrow d="M10 1v10L2 6z" />
                <span className="mr-8 ml-1.5 h-[11px] flex-1 rounded-full bg-[#9a9a9a]" />
                <Arrow d="M2 1v10l8-5z" />
            </div>
        </div>
    </div>
);

const StatusBar = () => (
    <div className="flex h-[27px] shrink-0 items-center bg-[#141414] px-2.5 pl-[15px] text-[13px] text-[#e0e0e0]">
        <span>Enter</span>
        <button className="ml-7 flex items-center gap-0.5"><AccessibilityIcon className="size-5" />Accessibility: Good to go</button>
        <div className="ml-auto flex items-center text-[#5c5c5c]">
            <button aria-label="Normal view" className="w-[50px]">
                <svg viewBox="0 0 18 18" className="mx-auto size-[18px]" fill="none" stroke="currentColor" strokeWidth="1.500">
                    <path d="M1 1h16v16H1zM6.500 1v16M11.500 1v16M1 6.500h16M1 11.500h16" />
                </svg>
            </button>
            <button aria-label="Page layout view" className="w-[50px]">
                <svg viewBox="0 0 18 18" className="mx-auto size-[18px]" fill="none" stroke="currentColor" strokeWidth="1.500">
                    <path d="M1 1h16v16H1zM4.500 3.500h9v11h-9zM6.500 6.500h5M6.500 9h5M6.500 11.500h5" />
                </svg>
            </button>
            <button aria-label="Page break view" className="w-[50px]">
                <svg viewBox="0 0 18 18" className="mx-auto size-[18px]" fill="none" stroke="currentColor" strokeWidth="1.500">
                    <path d="M1 1h16v16H1zM1 11h10V1M6 1v5M11 8h6" />
                </svg>
            </button>
            <button aria-label="Zoom out" className="ml-1"><Minus className="size-4" strokeWidth={1.500} /></button>
            <input
                type="range"
                aria-label="Zoom"
                defaultValue={50}
                className="mx-1 h-4 w-[125px] appearance-none bg-transparent [&::-webkit-slider-runnable-track]:h-px [&::-webkit-slider-runnable-track]:bg-[#b8b8b8] [&::-webkit-slider-thumb]:-mt-1 [&::-webkit-slider-thumb]:h-[9px] [&::-webkit-slider-thumb]:w-px [&::-webkit-slider-thumb]:appearance-none [&::-webkit-slider-thumb]:bg-white"
            />
            <button aria-label="Zoom in"><Plus className="size-4" strokeWidth={1.500} /></button>
            <span className="ml-3">100%</span>
        </div>
    </div>
);

/* ---------- taskbar ---------- */

const APPS: { name: string; icon: React.ReactNode; running?: boolean; active?: boolean }[] = [
    { name: "Copilot", icon: <CopilotIcon /> },
    { name: "Edge", icon: <EdgeIcon /> },
    { name: "File Explorer", icon: <FolderIcon />, running: true },
    { name: "Store", icon: <StoreIcon /> },
    { name: "Outlook", icon: <OutlookIcon /> },
    { name: "Zoom", icon: <ZoomAppIcon />, running: true },
    { name: "Chrome 1", icon: <ChromeIcon badge="#e0b4c4" mark="#4a3a44" />, running: true },
    { name: "Chrome 2", icon: <ChromeIcon badge="#dcb8b0" mark="#a85a44" />, running: true },
    { name: "Chrome 3", icon: <ChromeIcon badge="#9a6cd8" mark="#f8c838" />, running: true },
    { name: "Excel", icon: <ExcelIcon className="size-[30px]" />, running: true, active: true },
    { name: "FileZilla", icon: <FileZillaIcon /> },
    { name: "Calculator", icon: <CalculatorIcon />, running: true },
    { name: "Tracker", icon: <HexIcon />, running: true },
];

const Taskbar = () => (
    <footer className="flex h-[50px] shrink-0 bg-linear-to-r from-[#252a20] via-[#2a2c22] via-50% to-[#1f2625] text-white">
        <button aria-label="Start" className="flex w-[60px] items-center justify-center"><WindowsIcon className="size-5" /></button>
        <label className="flex w-[360px] items-center border border-[#555] bg-[#303030] pr-2.5 pl-3.5">
            <SearchIcon className="size-5 shrink-0" />
            <input type="search" placeholder="Type here to search" className="ml-[15px] min-w-0 flex-1 bg-transparent text-lg outline-none placeholder:text-[#c4c4c4]" />
            <SparklesIcon className="h-8 w-20 shrink-0" />
        </label>
        <button aria-label="Task View" className="flex w-[63px] items-center justify-center pr-1"><TaskViewIcon className="size-5" /></button>
        <div className="flex">
            {APPS.map((app) => (
                <button key={app.name} aria-label={app.name} className={clsx("flex w-[62px] flex-col items-center", app.active && "bg-[#55564f]")}>
                    <span className="flex h-[47px] items-center pt-0.5">{app.icon}</span>
                    {app.running && <span className={clsx("h-[3px] bg-[#7fb2e0]", app.active ? "w-full" : "w-[51px]")} />}
                </button>
            ))}
        </div>
        <div className="mr-[5px] ml-auto flex items-center border-r border-[#666]">
            <button className="flex items-center gap-2.5 text-lg whitespace-pre"><WeatherIcon className="size-[30px]" />28°C  Mostly cloudy</button>
            <button aria-label="Show hidden icons" className="ml-6"><ChevronUp className="size-6" strokeWidth={1.200} /></button>
            <div className="ml-2 flex gap-2.5">
                <MonitorIcon />
                <CameraIcon />
                <BatteryIcon />
                <MutedIcon />
            </div>
            <div className="ml-3 flex w-[70px] flex-col items-center text-sm leading-[23px] whitespace-nowrap">
                <span>1:23 PM</span>
                <span>7/8/2025</span>
            </div>
            <button aria-label="Notifications" className="relative mr-[25px] ml-[22px]">
                <NotificationIcon />
                <span className="absolute -right-2.5 -bottom-3 flex size-5 items-center justify-center rounded-full border border-[#8a8a8a] bg-[#2b3330] text-[13px] font-bold">2</span>
            </button>
        </div>
    </footer>
);

const App = () => {
    return (
        <div className="flex h-screen flex-col overflow-hidden bg-[#0a0a0a] font-['Open_Sans','Noto_Sans',sans-serif]">
            <TitleBar />
            <MenuTabs />
            <Ribbon />
            <FormulaBar />
            <main className="flex min-h-0 flex-1">
                <div className="relative min-w-0 flex-1 overflow-hidden">
                    <Sheet />
                    <StatusWidget />
                </div>
                <div className="mr-[3px] ml-0.5 flex w-5 flex-col items-center rounded-full bg-[#151515] pt-1.5 pb-0.5">
                    <Arrow d="M1 10h10L6 2z" />
                    <span className="mt-1 mb-7 w-[11px] flex-1 rounded-full bg-[#9a9a9a]" />
                    <Arrow d="M1 2h10l-5 8z" />
                </div>
            </main>
            <SheetTabs />
            <StatusBar />
            <Taskbar />
        </div>
    );
};

export default App;
